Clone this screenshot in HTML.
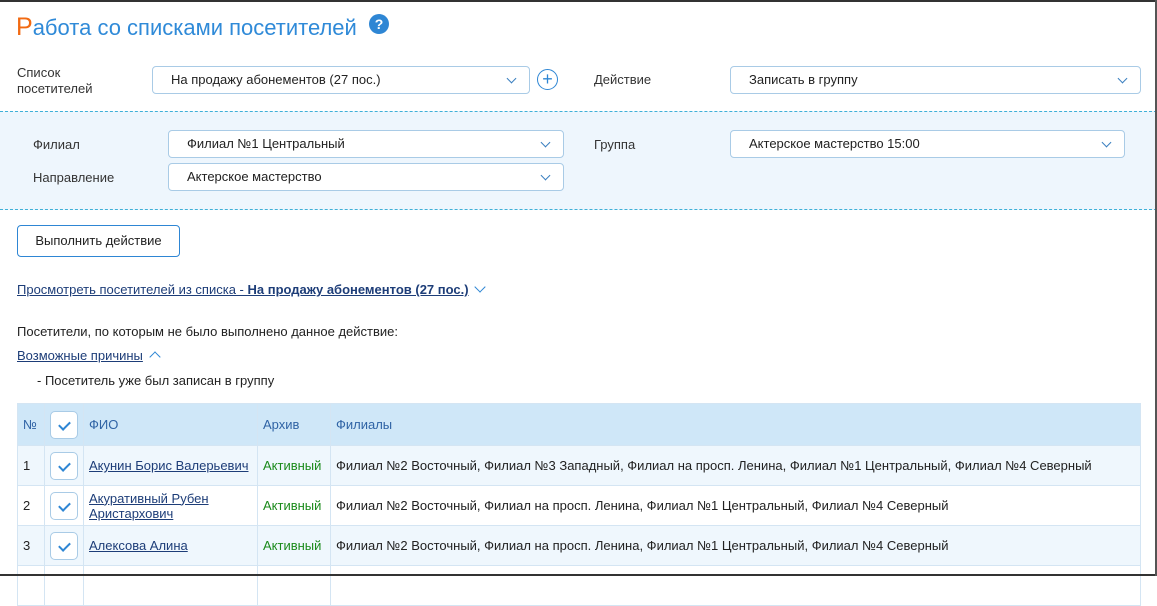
<html><head><style>
body{margin:0;width:1157px;height:576px;overflow:hidden;background:#fff;font-family:"Liberation Sans",sans-serif;font-size:13px;color:#222;position:relative}
.a{position:absolute}
.sel{position:absolute;border:1px solid #a9cbe6;border-radius:4px;background:#fff;height:28px;box-sizing:border-box;padding:0 0 0 18px;line-height:26px;font-size:13px}
.sel:after{content:"";position:absolute;right:14px;top:8px;width:6px;height:6px;border-right:1px solid #3a7fc0;border-bottom:1px solid #3a7fc0;transform:rotate(45deg)}
.lbl{position:absolute;color:#333;font-size:13px}
table{position:absolute;left:17px;top:403px;width:1124px;border-collapse:collapse;font-size:13px;table-layout:fixed}
td{border:1px solid #d4e5f3;padding:0 5px;height:40px;box-sizing:border-box}
tr.h td{background:#cfe7f8;color:#2f63a5;height:42px}
tr.o td{background:#eff7fd}
.cb{width:28px;height:28px;border:1px solid #a9cbe6;border-radius:5px;background:#fff;box-sizing:border-box;position:relative;margin:0 auto}
.cb:after{content:"";position:absolute;left:10px;top:7px;width:5px;height:9px;border-right:2px solid #2e86d4;border-bottom:2px solid #2e86d4;transform:rotate(45deg)}
a{color:#1d3d78;text-decoration:underline}
.g{color:#1a8a1a}
</style></head><body>
<div class="a" style="left:0;top:0;width:1157px;height:2px;background:#333"></div>
<div class="a" style="left:16px;top:13px;font-size:22px;color:#2f8ad8;white-space:nowrap"><span style="color:#f26a12;font-size:25px">Р</span>абота со списками посетителей</div>
<div class="a" style="left:369px;top:14px;width:20px;height:20px;border-radius:50%;background:#2e86d4;color:#fff;font-weight:bold;font-size:14px;text-align:center;line-height:20px">?</div>
<div class="lbl" style="left:17px;top:65px;line-height:16px">Список<br>посетителей</div>
<div class="sel" style="left:152px;top:66px;width:378px">На продажу абонементов (27 пос.)</div>
<div class="a" style="left:537px;top:69px;width:19px;height:19px;border:1px solid #2e86d4;border-radius:50%;color:#2e86d4;text-align:center;line-height:19px;font-size:18px">+</div>
<div class="lbl" style="left:594px;top:72px">Действие</div>
<div class="sel" style="left:730px;top:66px;width:411px">Записать в группу</div>
<div class="a" style="left:0;top:111px;width:1157px;height:97px;background:#eef6fd;border-top:1px dashed #3fb0d8;border-bottom:1px dashed #3fb0d8"></div>
<div class="lbl" style="left:33px;top:137px">Филиал</div>
<div class="sel" style="left:168px;top:130px;width:396px">Филиал №1 Центральный</div>
<div class="lbl" style="left:33px;top:170px">Направление</div>
<div class="sel" style="left:168px;top:163px;width:396px">Актерское мастерство</div>
<div class="lbl" style="left:594px;top:137px">Группа</div>
<div class="sel" style="left:730px;top:130px;width:395px">Актерское мастерство 15:00</div>
<div class="a" style="left:17px;top:225px;width:163px;height:32px;border:1px solid #2e86d4;border-radius:4px;box-sizing:border-box;text-align:center;line-height:30px">Выполнить действие</div>
<div class="a" style="left:17px;top:282px;color:#1d3d78;text-decoration:underline">Просмотреть посетителей из списка - <b>На продажу абонементов (27 пос.)</b></div>
<div class="a" style="left:476px;top:283px;width:7px;height:7px;border-right:1px solid #2e86d4;border-bottom:1px solid #2e86d4;transform:rotate(45deg)"></div>
<div class="a" style="left:17px;top:324px">Посетители, по которым не было выполнено данное действие:</div>
<div class="a" style="left:17px;top:348px;color:#1d3d78;text-decoration:underline">Возможные причины</div>
<div class="a" style="left:151px;top:353px;width:7px;height:7px;border-left:1px solid #2e86d4;border-top:1px solid #2e86d4;transform:rotate(45deg)"></div>
<div class="a" style="left:37px;top:373px">- Посетитель уже был записан в группу</div>
<table>
<colgroup><col style="width:27px"><col style="width:39px"><col style="width:174px"><col style="width:73px"><col></colgroup>
<tr class="h"><td>№</td><td><div class="cb"></div></td><td>ФИО</td><td>Архив</td><td>Филиалы</td></tr>
<tr class="o"><td>1</td><td><div class="cb"></div></td><td><a>Акунин Борис Валерьевич</a></td><td class="g">Активный</td><td>Филиал №2 Восточный, Филиал №3 Западный, Филиал на просп. Ленина, Филиал №1 Центральный, Филиал №4 Северный</td></tr>
<tr><td>2</td><td><div class="cb"></div></td><td style="line-height:15px"><a>Акуративный Рубен<br>Аристархович</a></td><td class="g">Активный</td><td>Филиал №2 Восточный, Филиал на просп. Ленина, Филиал №1 Центральный, Филиал №4 Северный</td></tr>
<tr class="o"><td>3</td><td><div class="cb"></div></td><td><a>Алексова Алина</a></td><td class="g">Активный</td><td>Филиал №2 Восточный, Филиал на просп. Ленина, Филиал №1 Центральный, Филиал №4 Северный</td></tr>
<tr><td></td><td></td><td></td><td></td><td></td></tr>
</table>
<div class="a" style="left:0;top:574px;width:1157px;height:2px;background:#333"></div>
<div class="a" style="right:0;top:0;width:2px;height:576px;background:#555"></div>
</body></html>
